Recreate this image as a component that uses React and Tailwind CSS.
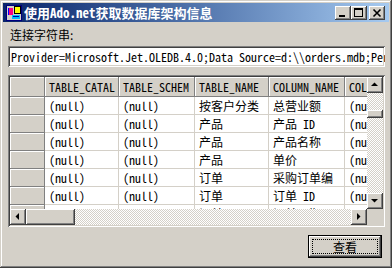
import React from "react";

const FACE = "bg-[#d4d0c8]";
const RAISED = "shadow-[inset_-1px_-1px_#404040,inset_1px_1px_#ffffff,inset_-2px_-2px_#808080,inset_2px_2px_#d4d0c8]";
const SUNKEN = "shadow-[inset_1px_1px_#808080,inset_-1px_-1px_#ffffff,inset_2px_2px_#404040,inset_-2px_-2px_#d4d0c8]";
const CHECKER = "bg-[repeating-conic-gradient(#d4d0c8_0_25%,#ffffff_0_50%)] bg-[length:2px_2px]";
const MONO = "font-['Noto_Sans_Mono_CJK_SC','Liberation_Mono','Noto_Sans_CJK_SC',monospace]";

const COLS = ["w-[35px]", "w-[74px]", "w-[76px]", "w-[74px]", "w-[76px]", "w-[80px]"];
const HEADERS = ["TABLE_CATAL", "TABLE_SCHEM", "TABLE_NAME", "COLUMN_NAME", "COLUMN_GUID"];
const ROWS = [
  ["(null)", "(null)", "按客户分类", "总营业额", "(null)"],
  ["(null)", "(null)", "产品", "产品 ID", "(null)"],
  ["(null)", "(null)", "产品", "产品名称", "(null)"],
  ["(null)", "(null)", "产品", "单价", "(null)"],
  ["(null)", "(null)", "订单", "采购订单编", "(null)"],
  ["(null)", "(null)", "订单", "订单 ID", "(null)"],
  ["(null)", "(null)", "订单", "订单日期", "(null)"],
];

function AppIcon() {
  return (
    <svg width="16" height="16" viewBox="0 0 16 16" shapeRendering="crispEdges">
      <rect x="0" y="0" width="16" height="16" fill="#d4d0c8" />
      <rect x="0.5" y="0.5" width="15" height="15" fill="none" stroke="#000080" />
      <rect x="2" y="3" width="5" height="7" fill="#ff0080" />
      <rect x="2" y="3" width="1" height="7" fill="#0000ff" />
      <rect x="8.5" y="1.5" width="6" height="7" fill="#ffff00" stroke="#000000" />
      <rect x="6" y="10" width="8" height="4" fill="#00c0ff" />
      <rect x="7" y="11" width="6" height="1" fill="#0000a0" />
    </svg>
  );
}

function CaptionBtn({ children }) {
  return (
    <div className={`w-[16px] h-[14px] ${FACE} ${RAISED}`}>
      <svg width="16" height="14" viewBox="0 0 16 14" shapeRendering="crispEdges">{children}</svg>
    </div>
  );
}

function ArrowBtn({ dir }) {
  const pts = {
    up: "4,9 11,9 7.5,5.5",
    down: "4,6 11,6 7.5,9.5",
    left: "9,4 9,11 5.5,7.5",
    right: "6,4 6,11 9.5,7.5",
  }[dir];
  return (
    <div className={`w-[16px] h-[16px] shrink-0 ${FACE} ${RAISED}`}>
      <svg width="16" height="16" viewBox="0 0 16 16">
        <polygon points={pts} fill="#000000" />
      </svg>
    </div>
  );
}

function Grid() {
  return (
    <div className={`mt-[8px] h-[152px] p-[2px] ${SUNKEN} bg-[#808080]`}>
      <div className="flex flex-col h-[148px]">
        <div className="flex h-[132px]">
          <div className={`w-[357px] h-[132px] overflow-hidden bg-white ${MONO} text-[12px] text-black`}>
            <div className="flex h-[20px]">
              <div className={`${COLS[0]} shrink-0 ${FACE} border-r border-b border-[#808080] shadow-[inset_1px_1px_#ffffff]`} />
              {HEADERS.map((h, i) => (
                <div
                  key={h}
                  className={`${COLS[i + 1]} shrink-0 ${FACE} border-r border-b border-[#808080] shadow-[inset_1px_1px_#ffffff] pl-[4px] leading-[19px] whitespace-nowrap overflow-hidden`}
                >
                  {h}
                </div>
              ))}
            </div>
            {ROWS.map((r, ri) => (
              <div key={ri} className="flex h-[18px]">
                <div className={`${COLS[0]} shrink-0 ${FACE} border-r border-b border-[#808080] shadow-[inset_1px_1px_#ffffff]`} />
                {r.map((c, ci) => (
                  <div
                    key={ci}
                    className={`${COLS[ci + 1]} shrink-0 bg-white border-r border-b border-[#d4d0c8] pl-[4px] leading-[17px] whitespace-nowrap overflow-hidden`}
                  >
                    {c}
                  </div>
                ))}
              </div>
            ))}
          </div>
          <div className={`w-[16px] flex flex-col ${CHECKER}`}>
            <ArrowBtn dir="up" />
            <div className="flex-1 pt-[17px]">
              <div className={`h-[8px] ${FACE} ${RAISED}`} />
            </div>
            <ArrowBtn dir="down" />
          </div>
        </div>
        <div className="flex h-[16px]">
          <div className={`w-[357px] flex ${CHECKER}`}>
            <ArrowBtn dir="left" />
            <div className={`w-[49px] h-[16px] ${FACE} ${RAISED}`} />
            <div className="flex-1" />
            <ArrowBtn dir="right" />
          </div>
          <div className={`w-[16px] ${FACE}`} />
        </div>
      </div>
    </div>
  );
}

export default function App() {
  return (
    <div className={`w-[392px] h-[268px] ${FACE} p-[3px] shadow-[inset_-1px_-1px_#404040,inset_1px_1px_#d4d0c8,inset_-2px_-2px_#808080,inset_2px_2px_#ffffff] overflow-hidden`}>
      <div className="h-[19px] flex items-center bg-linear-to-r from-[#0a246a] to-[#a6caf0]">
        <div className="ml-[3px]">
          <AppIcon />
        </div>
        <span className={`ml-[2px] text-white font-bold text-[13px] leading-[19px] ${MONO}`}>
          使用Ado.net获取数据库架构信息
        </span>
        <div className="ml-auto mr-[4px] flex">
          <CaptionBtn>
            <rect x="4" y="9" width="6" height="2" fill="#000" />
          </CaptionBtn>
          <CaptionBtn>
            <rect x="3.5" y="2.5" width="8" height="8" fill="none" stroke="#000" />
            <rect x="3" y="3" width="9" height="1" fill="#000" />
          </CaptionBtn>
          <div className="w-[2px]" />
          <CaptionBtn>
            <path d="M4.5 3.5 L11.5 10.5 M11.5 3.5 L4.5 10.5" stroke="#000" strokeWidth="1.6" shapeRendering="auto" />
          </CaptionBtn>
        </div>
      </div>

      <div className="pl-[5px] pr-[4px]">
        <div className="mt-[6px] h-[14px] leading-[14px] text-[12px] text-black font-['Noto_Sans_CJK_SC',sans-serif] pl-[2px]">
          连接字符串:
        </div>
        <div className={`mt-[4px] h-[21px] bg-white ${SUNKEN} pl-[3px] pr-[2px] overflow-hidden whitespace-nowrap ${MONO} text-[12px] leading-[21px] text-black`}>
          Provider=Microsoft.Jet.OLEDB.4.0;Data Source=d:\\orders.mdb;Persist Security Info=False
        </div>

        <Grid />

        <div className="mt-[8px] flex justify-end pr-[3px]">
          <button className={`w-[74px] h-[23px] border border-black ${FACE} ${RAISED} p-[3px]`}>
            <div className="h-full border border-dotted border-black flex items-center justify-center text-[12px] text-black font-['Noto_Sans_CJK_SC',sans-serif]">
              查看
            </div>
          </button>
        </div>
      </div>
    </div>
  );
}
